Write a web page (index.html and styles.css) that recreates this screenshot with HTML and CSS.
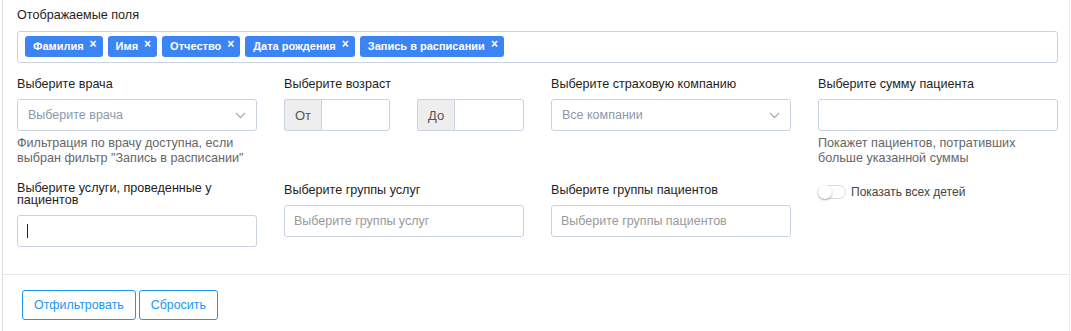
FILE: index.html
```html
<!DOCTYPE html>
<html lang="ru">
<head>
<meta charset="UTF-8">
<meta name="viewport" content="width=device-width, initial-scale=1.0">
<title>Фильтр пациентов</title>
<link rel="stylesheet" href="styles.css">
</head>
<body>

<div class="panel">
  <div class="panel-body">
    <div class="field-label">Отображаемые поля</div>
    <div class="tags">
      <span class="tag">Фамилия<span class="tag-x">×</span></span>
      <span class="tag">Имя<span class="tag-x">×</span></span>
      <span class="tag">Отчество<span class="tag-x">×</span></span>
      <span class="tag">Дата рождения<span class="tag-x">×</span></span>
      <span class="tag">Запись в расписании<span class="tag-x">×</span></span>
    </div>

    <div class="filters">
      <!-- Row 1 -->
      <div class="field">
        <div class="field-label">Выберите врача</div>
        <div class="select">
          <span class="select-text">Выберите врача</span>
          <svg class="chevron" width="11" height="7" viewBox="0 0 11 7"><polyline points="1,1 5.5,5.5 10,1" fill="none" stroke="#a9b0ba" stroke-width="1.3"/></svg>
        </div>
        <div class="help">Фильтрация по врачу доступна, если выбран фильтр "Запись в расписании"</div>
      </div>
      <div class="field">
        <div class="field-label">Выберите возраст</div>
        <div class="age">
          <div class="input-group">
            <span class="addon">От</span>
            <input class="group-input" type="text">
          </div>
          <div class="input-group">
            <span class="addon">До</span>
            <input class="group-input" type="text">
          </div>
        </div>
      </div>
      <div class="field">
        <div class="field-label">Выберите страховую компанию</div>
        <div class="select">
          <span class="select-text">Все компании</span>
          <svg class="chevron" width="11" height="7" viewBox="0 0 11 7"><polyline points="1,1 5.5,5.5 10,1" fill="none" stroke="#a9b0ba" stroke-width="1.3"/></svg>
        </div>
      </div>
      <div class="field">
        <div class="field-label">Выберите сумму пациента</div>
        <input class="input" type="text">
        <div class="help">Покажет пациентов, потративших больше указанной суммы</div>
      </div>

      <!-- Row 2 -->
      <div class="field">
        <div class="field-label">Выберите услуги, проведенные у пациентов</div>
        <div class="input input-focus"><span class="caret"></span></div>
      </div>
      <div class="field">
        <div class="field-label field-label-low">Выберите группы услуг</div>
        <input class="input" type="text" placeholder="Выберите группы услуг">
      </div>
      <div class="field">
        <div class="field-label field-label-low">Выберите группы пациентов</div>
        <input class="input" type="text" placeholder="Выберите группы пациентов">
      </div>
      <div class="field">
        <label class="switch-row">
          <span class="switch"><span class="knob"></span></span>
          <span class="switch-text">Показать всех детей</span>
        </label>
      </div>
    </div>
  </div>

  <div class="panel-footer">
    <button class="btn">Отфильтровать</button>
    <button class="btn">Сбросить</button>
  </div>
</div>

</body>
</html>
```

FILE: styles.css
```css
body {
  font-family: 'Liberation Sans', Arial, sans-serif;
  font-size: 12px;
  color: #333;
  background-color: #fff;
  margin: 0;
}
.panel {
  margin: 0 1px 0 2px;
  border-left: 1px solid #dcdcdc;
  border-right: 1px solid #ececec;
  min-height: 331px;
}
.panel-body {
  padding: 8px 11px 27px 14px;
}
.field-label {
  font-size: 12.6px;
  line-height: 14px;
  color: #1e1e1e;
}
.tags {
  margin-top: 9px;
  height: 32px;
  box-sizing: border-box;
  border: 1px solid #c9d3e0;
  border-radius: 3px;
  padding: 4px 7px;
  display: flex;
  gap: 5px;
}
.tag {
  background-color: #3c84f4;
  color: #fff;
  font-size: 11px;
  font-weight: bold;
  line-height: 21px;
  height: 21px;
  padding: 0 6px 0 8px;
  border-radius: 3px;
  white-space: nowrap;
}
.tag-x {
  margin-left: 6px;
  font-size: 12px;
  position: relative;
  top: -2px;
}
.filters {
  margin-top: 15px;
  display: grid;
  grid-template-columns: repeat(4, 240px);
  column-gap: 27px;
  row-gap: 16px;
}
.field .field-label {
  line-height: 12px;
  margin-bottom: 9px;
}
.field .field-label-low {
  margin-top: 2px;
}
.select {
  height: 32px;
  box-sizing: border-box;
  border: 1px solid #c9d3e0;
  border-radius: 3px;
  padding: 0 10px 0 10px;
  display: flex;
  align-items: center;
  justify-content: space-between;
}
.select-text {
  font-size: 12.5px;
  color: #8c98ac;
}
.help {
  margin-top: 5px;
  font-size: 12.6px;
  line-height: 15px;
  color: #666;
}
.age {
  display: grid;
  grid-template-columns: 106px 107px;
  column-gap: 27px;
}
.input-group {
  display: flex;
  height: 32px;
}
.addon {
  width: 37px;
  box-sizing: border-box;
  background-color: #eee;
  border: 1px solid #c9d3e0;
  border-right: none;
  border-radius: 3px 0 0 3px;
  font-size: 13px;
  color: #555;
  display: flex;
  align-items: center;
  padding-left: 10px;
}
.group-input {
  flex: 1;
  min-width: 0;
  box-sizing: border-box;
  border: 1px solid #c9d3e0;
  border-radius: 0 3px 3px 0;
  margin: 0;
  padding: 0 8px;
}
.input {
  display: block;
  width: 100%;
  height: 32px;
  box-sizing: border-box;
  border: 1px solid #c9d3e0;
  border-radius: 3px;
  margin: 0;
  padding: 0 9px;
  font-family: 'Liberation Sans', Arial, sans-serif;
  font-size: 12.5px;
  color: #333;
}
.input::placeholder {
  color: #999;
}
.input-focus {
  display: flex;
  align-items: center;
}
.caret {
  width: 1px;
  height: 14px;
  background-color: #222;
}
.switch-row {
  display: flex;
  align-items: center;
  margin-top: 3px;
}
.switch {
  width: 28px;
  height: 14px;
  box-sizing: border-box;
  border: 1px solid #dadada;
  border-radius: 7px;
  position: relative;
  background-color: #fff;
}
.knob {
  position: absolute;
  left: -1px;
  top: -1px;
  width: 14px;
  height: 14px;
  border-radius: 50%;
  background-color: #fff;
  box-shadow: 0 1px 2px rgba(0, 0, 0, 0.35);
}
.switch-text {
  margin-left: 5px;
  font-size: 12px;
  color: #444;
}
.panel-footer {
  border-top: 1px solid #e8e8e8;
  padding: 15px 19px;
  display: flex;
  gap: 3px;
}
.btn {
  height: 30px;
  background-color: #fff;
  color: #2196f3;
  border: 1px solid #2196f3;
  border-radius: 3px;
  padding: 0 11px;
  font-family: 'Liberation Sans', Arial, sans-serif;
  font-size: 12.4px;
  cursor: pointer;
}
```
